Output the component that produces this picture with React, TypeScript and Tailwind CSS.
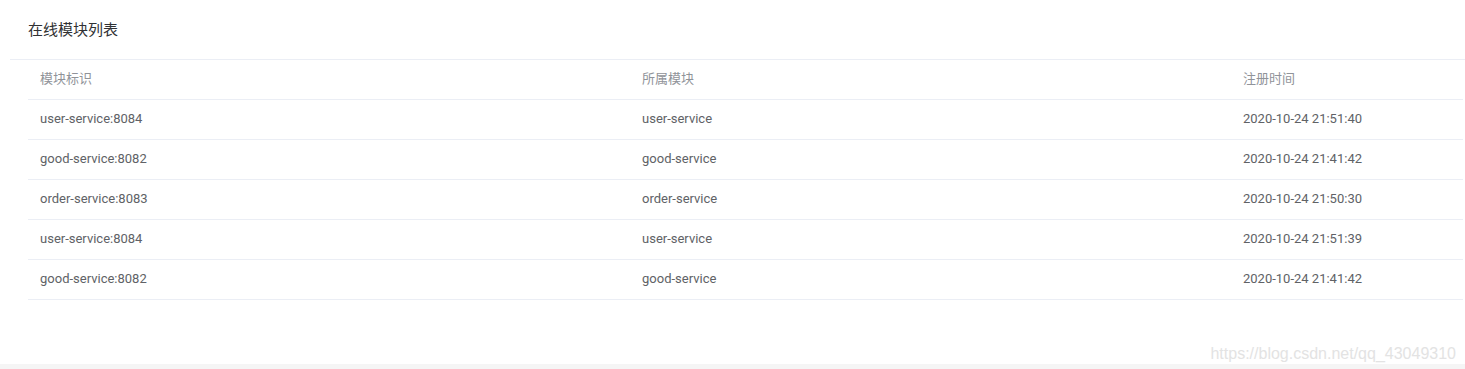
const rows = [
  { id: 'user-service:8084', module: 'user-service', time: '2020-10-24 21:51:40' },
  { id: 'good-service:8082', module: 'good-service', time: '2020-10-24 21:41:42' },
  { id: 'order-service:8083', module: 'order-service', time: '2020-10-24 21:50:30' },
  { id: 'user-service:8084', module: 'user-service', time: '2020-10-24 21:51:39' },
  { id: 'good-service:8082', module: 'good-service', time: '2020-10-24 21:41:42' },
];

export default function App() {
  return (
    <div className="w-[1465px] h-[369px] bg-white flex flex-col font-['Roboto','Noto_Sans_CJK_SC',sans-serif] overflow-hidden">
      <div className="flex-1 pl-[10px] flex flex-col">
        <div className="h-[60px] border-b border-[#ebeef5] pl-[18px] pt-[2px] flex items-center">
          <span className="text-[15px] text-[#303133] leading-none">在线模块列表</span>
        </div>
        <div className="pl-[18px] pr-[2px]">
          <div className="grid grid-cols-[602px_601px_1fr] h-[40px] pb-[1px] items-center border-b border-[#ebeef5] text-[13px] text-[#909399]">
            <div className="px-3">模块标识</div>
            <div className="px-3">所属模块</div>
            <div className="px-3">注册时间</div>
          </div>
          {rows.map((r, i) => (
            <div key={i} className="grid grid-cols-[602px_601px_1fr] h-[40px] pb-[2px] items-center border-b border-[#ebeef5] text-[13px] text-[#606266]">
              <div className="px-3">{r.id}</div>
              <div className="px-3">{r.module}</div>
              <div className="px-3">{r.time}</div>
            </div>
          ))}
        </div>
        <div className="flex-1 flex items-end justify-end pr-[9px] pb-[2px]">
          <span className="text-[16px] leading-none text-[#e3e3e3] font-['Liberation_Sans',sans-serif]">https://blog.csdn.net/qq_43049310</span>
        </div>
      </div>
      <div className="h-[5px] bg-[#f5f5f5]" />
    </div>
  );
}
